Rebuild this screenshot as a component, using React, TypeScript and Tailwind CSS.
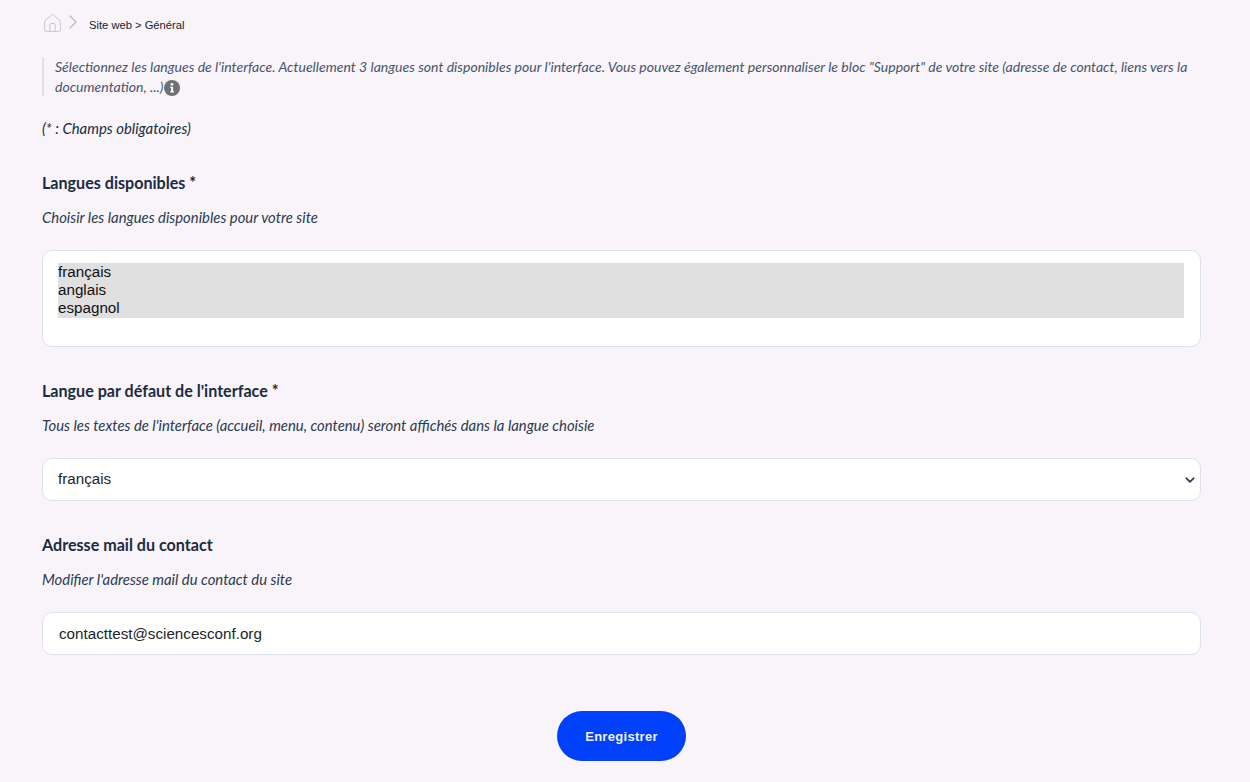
import { ChevronRight, House } from "lucide-react"

const body = "font-['Lato','Noto_Sans',sans-serif]"
const control = "w-full rounded-[10px] border border-[#dee2ec] bg-white font-['Liberation_Sans',sans-serif] text-[15.2px] text-[#212529]"
const selected = "checked:bg-[linear-gradient(#e0e0e0,#e0e0e0)]"

function Field({ title, hint, children }: { title: string; hint: string; children: React.ReactNode }) {
  return (
    <div>
      <h3 className="text-[16.1px] leading-[22px] font-bold text-[#1c2b3f]">{title}</h3>
      <p className="mt-[13px] text-[14.85px] leading-[20px] text-[#2c3a4d] italic">{hint}</p>
      <div className="mt-[23px]">{children}</div>
    </div>
  )
}

export default function App() {
  return (
    <div className={`h-[782px] overflow-hidden bg-[#f8f4fa] pr-[49px] pl-[42px] ${body}`}>
      <nav className="flex h-[50px] items-center">
        <House className="size-[21px] -translate-y-[2px] text-[#bfc5d0]" strokeWidth={1.1} />
        <ChevronRight className="-ml-[2px] size-[24px] -translate-y-[3px] text-[#b4b9c4]" strokeWidth={1.2} />
        <span className="ml-[4px] font-['Liberation_Sans',sans-serif] text-[11.2px] text-[#141c2b]">Site web &gt; Général</span>
      </nav>

      <div className="mt-[7px] border-l-2 border-[#dfe2ea] pl-[11px] text-[14.05px] leading-[19.5px] text-[#47556a] italic">
        Sélectionnez les langues de l'interface. Actuellement 3 langues sont disponibles pour l'interface. Vous pouvez également personnaliser le bloc "Support" de votre site (adresse de contact, liens vers la documentation, ...){" "}
        <svg className="-my-[4px] -ml-[3px] inline-block size-[16px] align-middle" viewBox="0 0 16 16">
          <circle cx="8" cy="8" r="8" fill="#6f7175" />
          <circle cx="8" cy="4.3" r="1.4" fill="#fff" />
          <path d="M6.2 6.7h2.9v4.6h1v1.3H6.2v-1.3h1V8H6.2z" fill="#fff" />
        </svg>
      </div>

      <p className="mt-[22px] text-[14.9px] leading-[20px] text-[#1c2b3f] italic">(* : Champs obligatoires)</p>

      <div className="mt-[34px] flex flex-col gap-[33px]">
        <Field title="Langues disponibles *" hint="Choisir les langues disponibles pour votre site">
          <select
            multiple
            defaultValue={["fr", "en", "es"]}
            className={`${control} block h-[97px] overflow-hidden py-[12px] pr-[16px] pl-[15px] leading-[18px] outline-none`}
          >
            <option className={selected} value="fr">français</option>
            <option className={selected} value="en">anglais</option>
            <option className={selected} value="es">espagnol</option>
          </select>
        </Field>

        <Field title="Langue par défaut de l'interface *" hint="Tous les textes de l'interface (accueil, menu, contenu) seront affichés dans la langue choisie">
          <div className="relative">
            <select defaultValue="fr" className={`${control} block h-[43px] appearance-none pr-[16px] pl-[15px] outline-none`}>
              <option value="fr">français</option>
            </select>
            <svg className="pointer-events-none absolute top-[17px] right-[6px] size-[10px]" viewBox="0 0 16 16" fill="none" stroke="#2a3b52" strokeWidth="2.6" strokeLinecap="round" strokeLinejoin="round">
              <path d="M2 5l6 6 6-6" />
            </svg>
          </div>
        </Field>

        <Field title="Adresse mail du contact" hint="Modifier l'adresse mail du contact du site">
          <input
            readOnly
            value="contacttest@sciencesconf.org"
            className={`${control} block h-[43px] px-[16px] outline-none`}
          />
        </Field>
      </div>

      <div className="mt-[56px] flex justify-center">
        <button className="h-[50px] w-[129px] rounded-full bg-[#0040fa] pt-[1px] font-['Liberation_Sans',sans-serif] text-[13px] font-bold tracking-[0.3px] text-[#eef1ff]">
          Enregistrer
        </button>
      </div>
    </div>
  )
}
